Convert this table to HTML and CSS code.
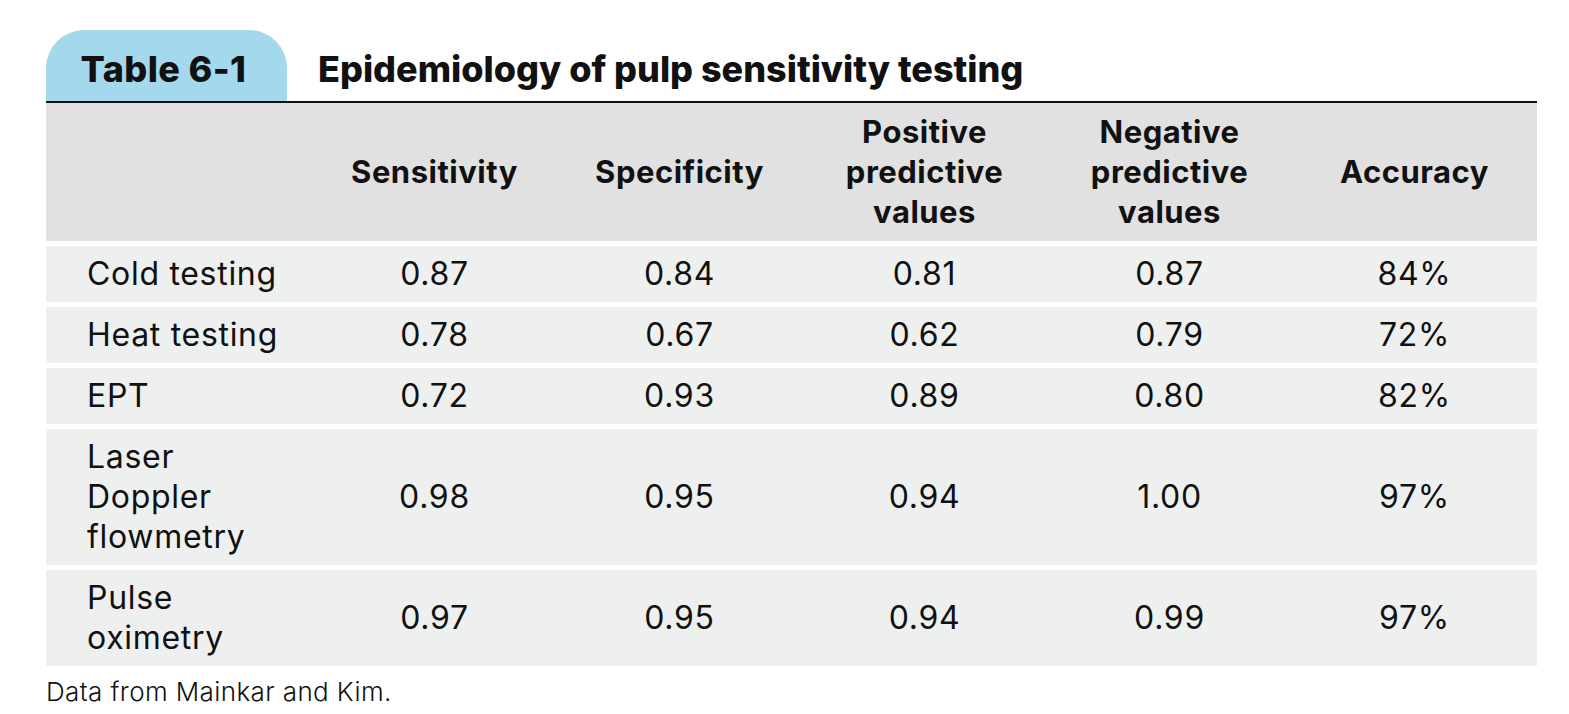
FILE: index.html
```html
<!DOCTYPE html>
<html lang="en">
<head>
<meta charset="utf-8">
<title>Table 6-1 Epidemiology of pulp sensitivity testing</title>
<link rel="stylesheet" href="styles.css">
</head>
<body>
<div class="wrap">
  <div class="head">
    <div class="tab">Table 6-1</div>
    <h1 class="title">Epidemiology of pulp sensitivity testing</h1>
  </div>
  <div class="grid">
    <div class="hrow">
      <div class="cell"></div>
      <div class="cell">Sensitivity</div>
      <div class="cell">Specificity</div>
      <div class="cell">Positive<br>predictive<br>values</div>
      <div class="cell">Negative<br>predictive<br>values</div>
      <div class="cell">Accuracy</div>
    </div>
    <div class="row">
      <div class="cell label">Cold testing</div>
      <div class="cell">0.87</div><div class="cell">0.84</div><div class="cell">0.81</div><div class="cell">0.87</div><div class="cell">84%</div>
    </div>
    <div class="row">
      <div class="cell label">Heat testing</div>
      <div class="cell">0.78</div><div class="cell">0.67</div><div class="cell">0.62</div><div class="cell">0.79</div><div class="cell">72%</div>
    </div>
    <div class="row">
      <div class="cell label">EPT</div>
      <div class="cell">0.72</div><div class="cell">0.93</div><div class="cell">0.89</div><div class="cell">0.80</div><div class="cell">82%</div>
    </div>
    <div class="row">
      <div class="cell label">Laser<br>Doppler<br>flowmetry</div>
      <div class="cell">0.98</div><div class="cell">0.95</div><div class="cell">0.94</div><div class="cell">1.00</div><div class="cell">97%</div>
    </div>
    <div class="row">
      <div class="cell label">Pulse<br>oximetry</div>
      <div class="cell">0.97</div><div class="cell">0.95</div><div class="cell">0.94</div><div class="cell">0.99</div><div class="cell">97%</div>
    </div>
  </div>
  <p class="note">Data from Mainkar and Kim.</p>
</div>
</body>
</html>
```

FILE: styles.css
```css
html, body {
  margin: 0;
  padding: 0;
  background: #ffffff;
}
body {
  font-family: Inter, Lato, "Noto Sans", sans-serif;
  color: #111111;
  font-variant-ligatures: none;
}
.wrap {
  width: 1491px;
  margin-left: 46px;
  padding-top: 30px;
}
.head {
  display: flex;
  align-items: flex-end;
  border-bottom: 2px solid #111111;
}
.tab {
  width: 241px;
  height: 71px;
  box-sizing: border-box;
  background: #a4d8ec;
  border-radius: 38px 38px 0 0;
  font-weight: 800;
  font-size: 36px;
  letter-spacing: 0.4px;
  line-height: 1;
  display: flex;
  align-items: flex-end;
  justify-content: center;
  padding-bottom: 14px;
  padding-right: 6px;
}
.title {
  margin: 0 0 14px 31px;
  font-size: 36px;
  letter-spacing: 0;
  font-weight: 800;
  line-height: 1;
}
.grid {
  display: flex;
  flex-direction: column;
  gap: 5px;
}
.hrow, .row {
  display: grid;
  grid-template-columns: 266px repeat(5, 245px);
}
.hrow {
  background: #e1e1e1;
  padding: 9px 0;
  font-weight: 700;
  font-size: 31px;
  letter-spacing: 0.5px;
  line-height: 40px;
}
.hrow .cell {
  display: flex;
  align-items: center;
  justify-content: center;
  text-align: center;
}
.row {
  background: #eef0ef;
  padding: 8px 0;
  font-size: 32px;
  letter-spacing: 0.7px;
  line-height: 40px;
}
.row .cell {
  display: flex;
  align-items: center;
  justify-content: center;
  text-align: center;
}
.row .label {
  justify-content: flex-start;
  text-align: left;
  padding-left: 41px;
}
.note {
  margin: 11px 0 0 0;
  font-size: 26px;
  letter-spacing: 0.4px;
  font-weight: 300;
  line-height: 30px;
}
```
